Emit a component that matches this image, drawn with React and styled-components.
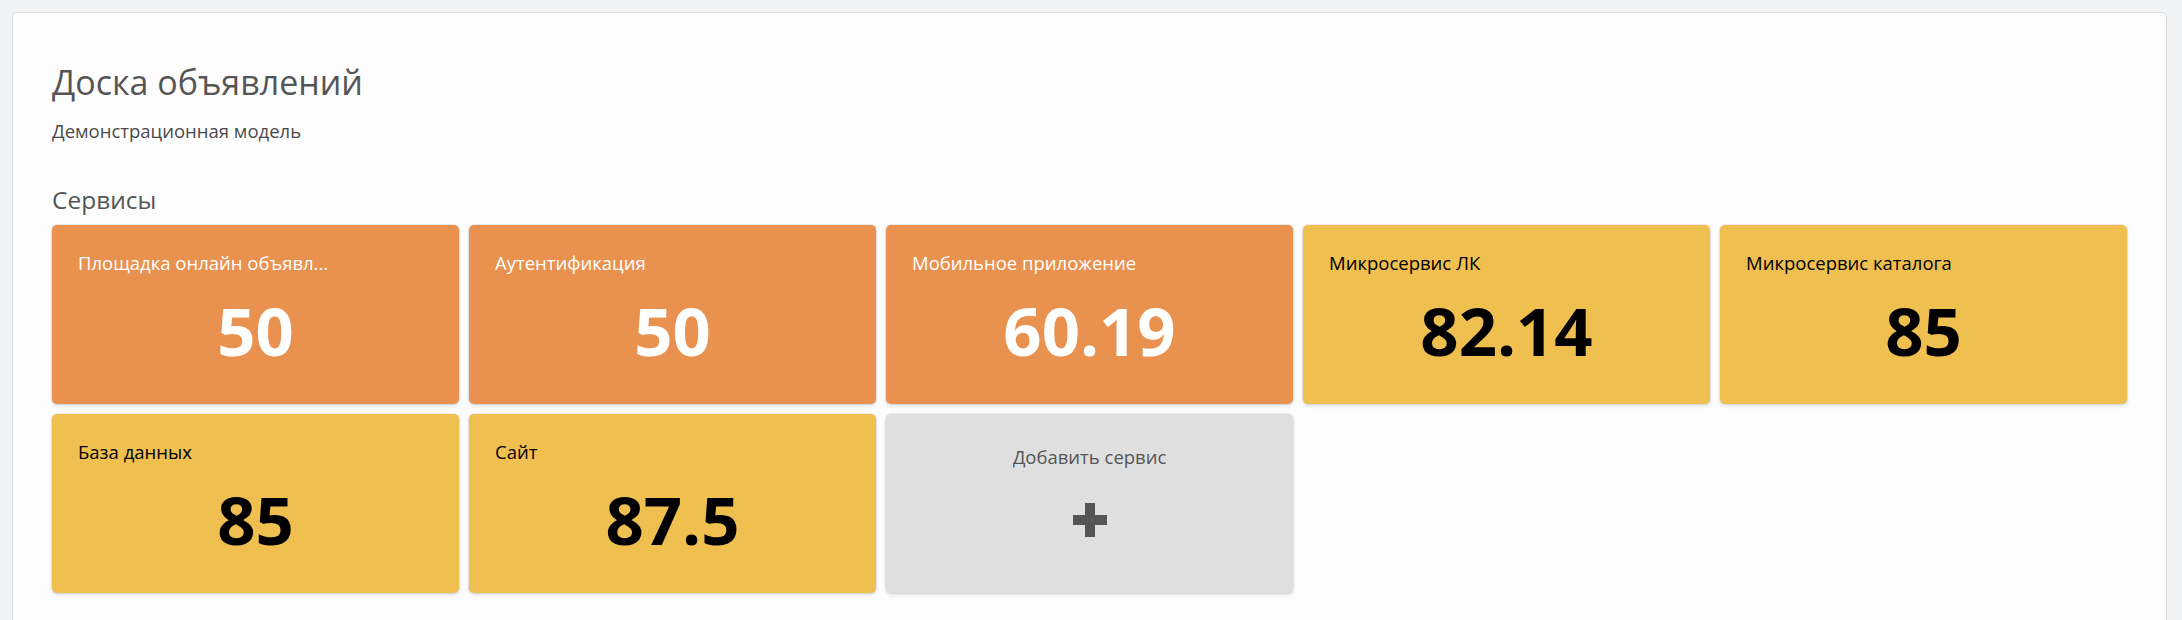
import React from "react";
import styled, { createGlobalStyle } from "styled-components";

const GlobalStyle = createGlobalStyle`
  html, body {
    margin: 0;
    padding: 0;
    background: #f1f2f4;
    font-family: "Open Sans", "Noto Sans", sans-serif;
  }
`;

const Page = styled.div`
  padding: 12px 15px 0 12px;
`;

const Panel = styled.section`
  background: #fdfdfe;
  border: 1px solid #dadbdd;
  border-radius: 5px;
  padding: 49px 39px 40px;
  min-height: 700px;
`;

const Title = styled.h1`
  margin: 0;
  font-size: 34px;
  line-height: 40px;
  font-weight: 400;
  color: #555;
`;

const Subtitle = styled.p`
  margin: 17px 0 0;
  font-size: 18.5px;
  line-height: 24px;
  color: #4a4a4a;
`;

const SectionTitle = styled.h2`
  margin: 42px 0 10px;
  font-size: 24.5px;
  line-height: 30px;
  font-weight: 400;
  color: #555;
`;

const Grid = styled.div`
  display: grid;
  grid-template-columns: repeat(5, 1fr);
  gap: 10px;
`;

const palette = {
  orange: { bg: "#e9914f", fg: "#ffffff" },
  yellow: { bg: "#efbf50", fg: "#000000" },
  add: { bg: "#dfdfdf", fg: "#555555" },
};

const Card = styled.div`
  height: 179px;
  box-sizing: border-box;
  padding: ${(p) => (p.$tone === "add" ? "31px" : "26px")} 26px 26px;
  border-radius: 5px;
  background: ${(p) => palette[p.$tone].bg};
  color: ${(p) => palette[p.$tone].fg};
  box-shadow: 0 0 0 1px rgba(0, 0, 0, 0.06), 0 2px 4px rgba(0, 0, 0, 0.12);
  display: flex;
  flex-direction: column;
  align-items: ${(p) => (p.$tone === "add" ? "center" : "stretch")};
  cursor: ${(p) => (p.$tone === "add" ? "pointer" : "default")};
`;

const Label = styled.div`
  font-size: 18.5px;
  line-height: 24px;
  white-space: nowrap;
  overflow: hidden;
  text-overflow: ellipsis;
`;

const Value = styled.div`
  margin-top: 22px;
  text-align: center;
  font-size: 67px;
  line-height: 67px;
  font-weight: 700;
`;

const AddIcon = styled.svg`
  margin-top: 34px;
  width: 34px;
  height: 34px;
  fill: #555;
`;

const services = [
  { name: "Площадка онлайн объявл...", score: 50 },
  { name: "Аутентификация", score: 50 },
  { name: "Мобильное приложение", score: 60.19 },
  { name: "Микросервис ЛК", score: 82.14 },
  { name: "Микросервис каталога", score: 85 },
  { name: "База данных", score: 85 },
  { name: "Сайт", score: 87.5 },
];

const toneFor = (score) => (score < 80 ? "orange" : "yellow");

const ServiceCard = ({ name, score }) => (
  <Card $tone={toneFor(score)}>
    <Label>{name}</Label>
    <Value>{score}</Value>
  </Card>
);

const AddCard = () => (
  <Card $tone="add">
    <Label>Добавить сервис</Label>
    <AddIcon viewBox="0 0 34 34">
      <rect x="12" y="0" width="10" height="34" />
      <rect x="0" y="12" width="34" height="10" />
    </AddIcon>
  </Card>
);

const App = () => {
  return (
    <Page>
      <GlobalStyle />
      <Panel>
        <Title>Доска объявлений</Title>
        <Subtitle>Демонстрационная модель</Subtitle>
        <SectionTitle>Сервисы</SectionTitle>
        <Grid>
          {services.map((s) => (
            <ServiceCard key={s.name} {...s} />
          ))}
          <AddCard />
        </Grid>
      </Panel>
    </Page>
  );
};

export default App;
